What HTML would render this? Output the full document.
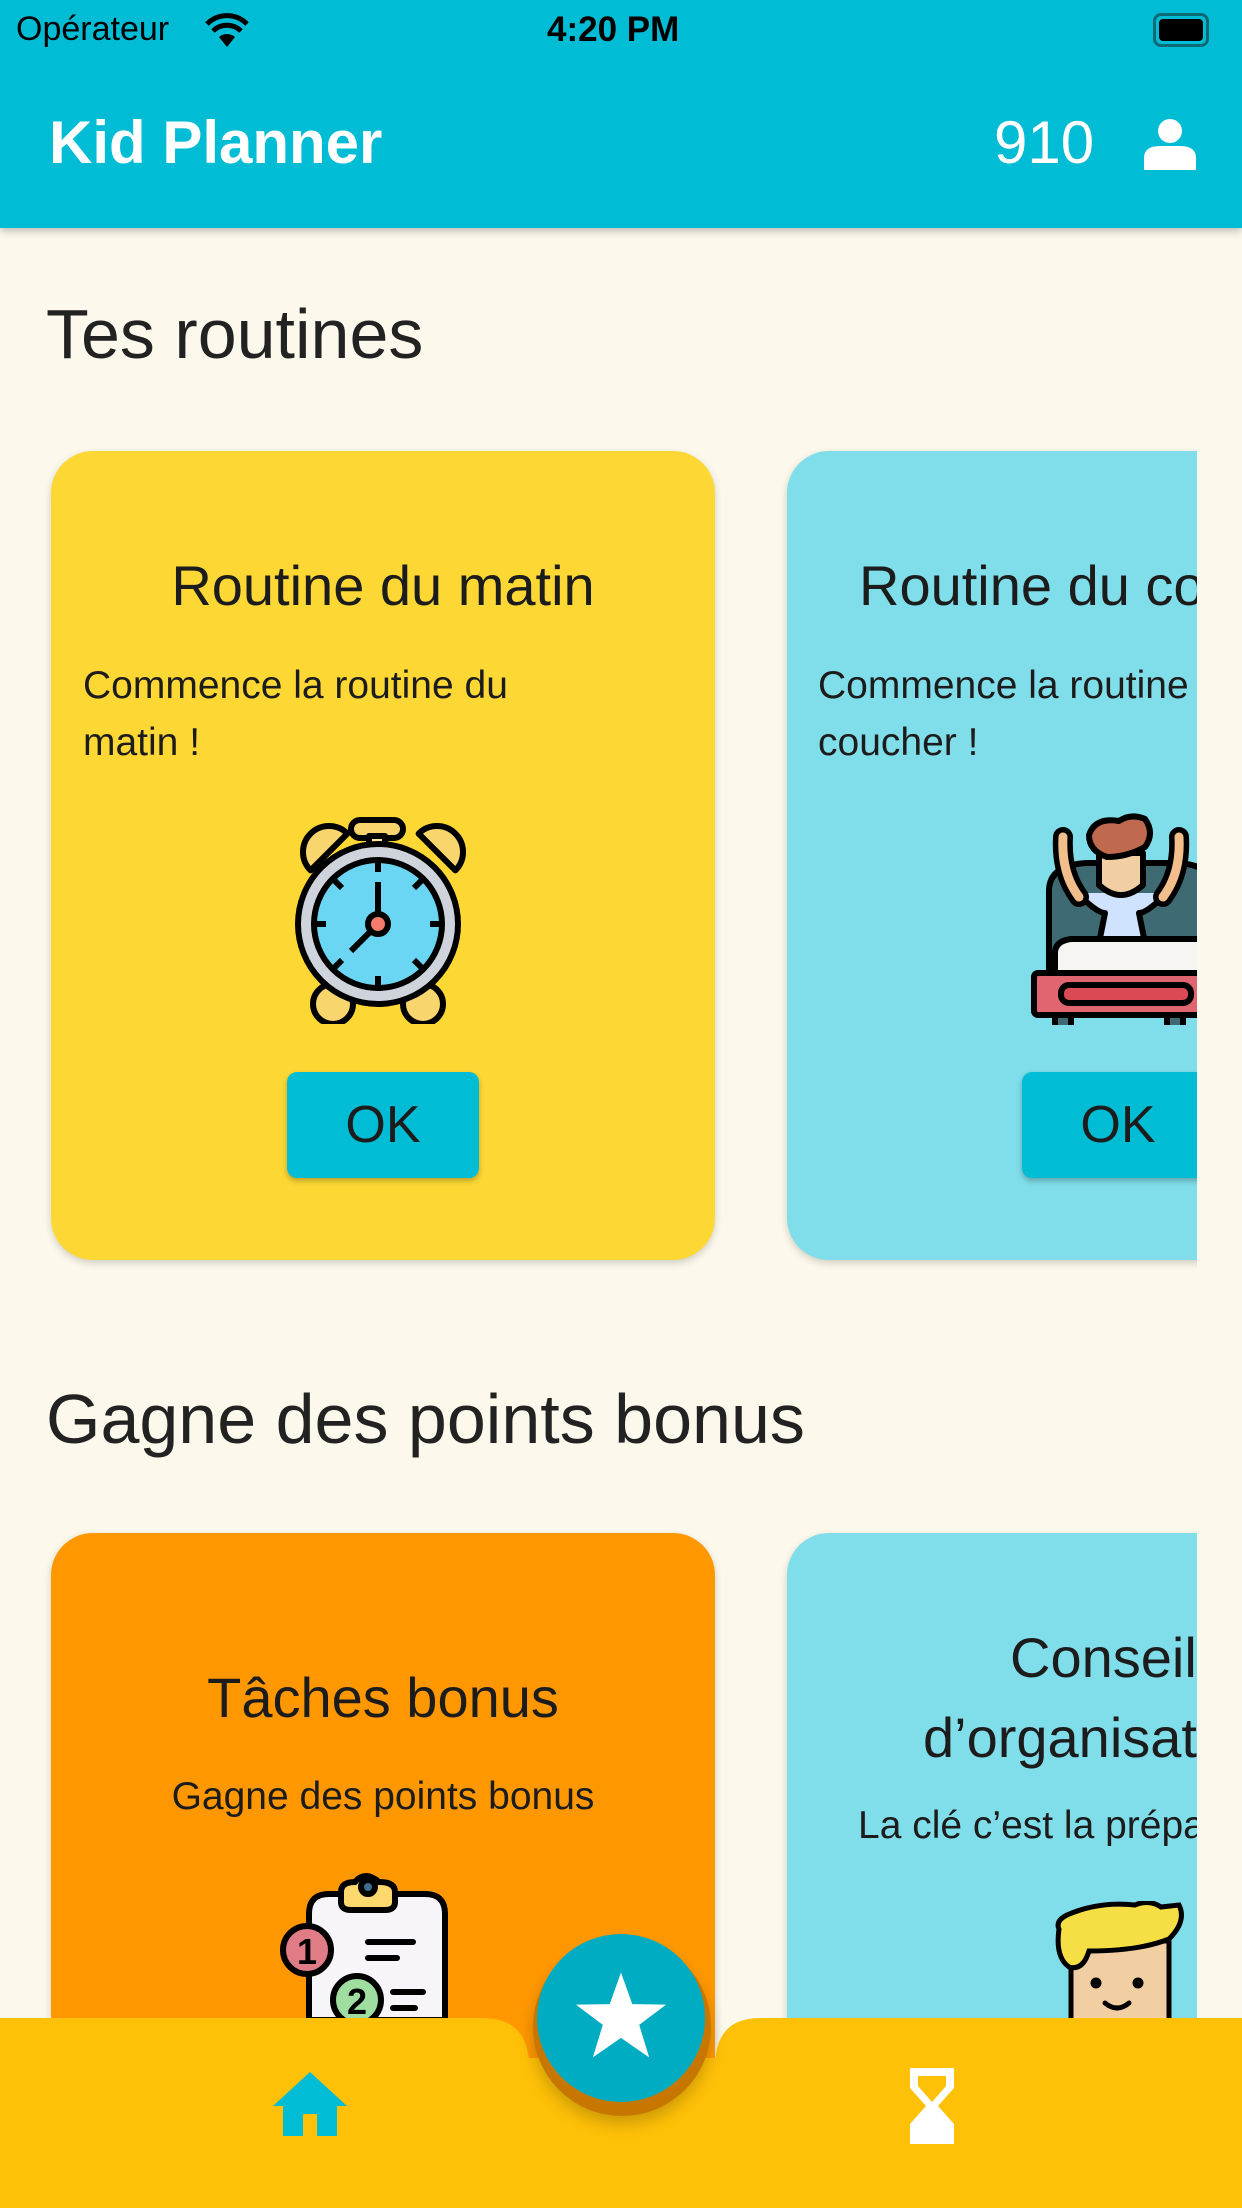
<!DOCTYPE html>
<html><head><meta charset="utf-8"><style>
*{margin:0;padding:0;box-sizing:border-box}
body{width:1242px;height:2208px;overflow:hidden;background:#FCF9EC;font-family:"Liberation Sans",sans-serif;color:#1c1c1c;position:relative}
.hdr{position:absolute;left:0;top:0;width:1242px;height:228px;background:#00BCD4;box-shadow:0 3px 8px rgba(0,0,0,.25);z-index:5}
.abs{position:absolute}
.card{position:absolute;border-radius:42px;overflow:hidden;box-shadow:0 3px 8px rgba(0,0,0,.18)}
.title{position:absolute;font-size:56px;white-space:nowrap;color:#1c1c1c}
.desc{position:absolute;font-size:39px;line-height:57px;white-space:nowrap}
.ok{position:absolute;width:192px;height:106px;background:#00BCD4;border-radius:10px;font-size:52px;text-align:center;line-height:106px;box-shadow:0 3px 6px rgba(0,0,0,.25)}
.h2{position:absolute;left:46px;font-size:70px;color:#222;white-space:nowrap}
</style></head><body>
<div class="hdr">
 <div class="abs" style="left:16px;top:10px;font-size:34px;color:#000">Opérateur</div>
 <svg class="abs" style="left:203px;top:13px" width="48" height="36" viewBox="0 0 46 36"><path d="M23 34 L15 24 A12 12 0 0 1 31 24 Z" fill="#000"/><path d="M9 18 A20 20 0 0 1 37 18" stroke="#000" stroke-width="5" fill="none"/><path d="M3 11 A28 28 0 0 1 43 11" stroke="#000" stroke-width="5" fill="none"/></svg>
 <div class="abs" style="left:547px;top:10px;font-size:35px;color:#000;font-weight:bold">4:20 PM</div>
 <div class="abs" style="left:1153px;top:13px;width:56px;height:34px;border:3px solid #0a6b77;border-radius:8px;padding:3px"><div style="width:100%;height:100%;background:#000;border-radius:4px"></div></div>
 <div class="abs" style="left:49px;top:108px;font-size:60px;font-weight:bold;color:#fff">Kid Planner</div>
 <div class="abs" style="left:994px;top:108px;font-size:60px;color:#fff">910</div>
 <svg class="abs" style="left:1142px;top:118px" width="56" height="52" viewBox="0 0 56 52"><circle cx="28" cy="13" r="12" fill="#fff"/><path d="M2 52 V40 Q2 28 18 28 H38 Q54 28 54 40 V52Z" fill="#fff"/></svg>
</div>

<div class="h2" style="top:294px">Tes routines</div>
<div class="h2" style="top:1379px">Gagne des points bonus</div>

<div class="abs" style="left:0;top:0;width:1197px;height:2208px;overflow:hidden">
 <div class="card" style="left:51px;top:451px;width:664px;height:809px;background:#FDD835">
  <div class="title" style="left:0;width:664px;text-align:center;top:102px">Routine du matin</div>
  <div class="desc" style="left:32px;top:206px">Commence la routine du<br>matin !</div>
  <svg class="abs" style="left:242px;top:363px" width="180" height="210" viewBox="0 0 180 210">
   <g stroke="#000" stroke-width="6" fill="#F9D56E" stroke-linejoin="round">
    <rect x="58" y="6" width="52" height="18" rx="9"/>
    <rect x="76" y="22" width="16" height="16" fill="#FCE79A"/>
    <path d="M-26 0 A26 26 0 0 1 26 0Z" transform="translate(36,38) rotate(-45)"/>
    <path d="M-26 0 A26 26 0 0 1 26 0Z" transform="translate(144,38) rotate(45)"/>
    <circle cx="40" cy="190" r="20"/><circle cx="130" cy="190" r="20"/>
    <circle cx="85" cy="110" r="80" fill="#CFD4DC"/>
    <circle cx="85" cy="110" r="64" fill="#6AD6F3"/>
    <path d="M85 46V58 M85 162V174 M21 110H33 M137 110H149 M40 65 L49 74 M130 65 L121 74 M40 155 L49 146 M130 155 L121 146 M85 68V104 M80 115 L58 137" fill="none"/>
    <circle cx="85" cy="110" r="10" fill="#F57C6B"/>
   </g>
  </svg>
  <div class="ok" style="left:236px;top:621px">OK</div>
 </div>

 <div class="card" style="left:787px;top:451px;width:664px;height:809px;background:#80DEEA">
  <div class="title" style="left:72px;top:102px">Routine du coucher</div>
  <div class="desc" style="left:31px;top:206px">Commence la routine du<br>coucher !</div>
  <svg class="abs" style="left:240px;top:362px" width="200" height="212" viewBox="0 0 200 212">
   <g stroke="#000" stroke-width="6" stroke-linecap="round" stroke-linejoin="round">
    <path d="M22 170 V78 Q22 52 60 50 H150 Q188 52 188 78 V170Z" fill="#3E6B73"/>
    <path d="M50 80 Q70 100 78 100 L72 130 H118 L112 100 Q120 100 140 80" fill="#CFE3FF"/>
    <path d="M36 24 Q34 60 52 84" stroke-width="20" fill="none"/>
    <path d="M36 24 Q34 60 52 84" stroke="#F2BE8C" stroke-width="9" fill="none"/>
    <path d="M152 24 Q154 60 136 84" stroke-width="20" fill="none"/>
    <path d="M152 24 Q154 60 136 84" stroke="#F2BE8C" stroke-width="9" fill="none"/>
    <path d="M72 40 V72 Q94 92 116 72 V40Z" fill="#F2CFA3"/>
    <path d="M62 22 Q68 4 92 8 Q104 0 118 6 Q128 20 118 34 Q100 44 80 44 Q62 38 62 22Z" fill="#BF6A4E"/>
    <path d="M28 140 Q28 128 44 126 H176 Q192 128 192 140 V160 H28Z" fill="#F7F5F2"/>
    <rect x="7" y="160" width="200" height="42" rx="4" fill="#DF6570"/>
    <rect x="34" y="172" width="130" height="18" rx="8" fill="#D94A55"/>
    <rect x="28" y="202" width="16" height="14" fill="#3E6B73"/>
    <rect x="140" y="202" width="16" height="14" fill="#3E6B73"/>
   </g>
  </svg>
  <div class="ok" style="left:235px;top:621px">OK</div>
 </div>

 <div class="card" style="left:51px;top:1533px;width:664px;height:640px;background:#FF9800">
  <div class="title" style="left:0;width:664px;text-align:center;top:132px">Tâches bonus</div>
  <div class="desc" style="left:0;width:664px;text-align:center;top:235px">Gagne des points bonus</div>
  <svg class="abs" style="left:224px;top:337px" width="180" height="160" viewBox="0 0 180 160">
   <g stroke="#000" stroke-width="6" stroke-linecap="round">
    <path d="M34 150 V44 Q34 24 54 24 H150 Q170 24 170 44 V150Z" fill="#F7F5FA"/>
    <path d="M66 22 Q66 12 80 12 Q90 0 104 12 Q120 12 120 22 V32 Q120 40 110 40 H76 Q66 40 66 32Z" fill="#FFD96E"/>
    <circle cx="93" cy="17" r="7" fill="#3B6E8F"/>
    <circle cx="32" cy="80" r="24" fill="#E07C86"/>
    <circle cx="82" cy="130" r="24" fill="#A0DDA0"/>
    <path d="M93 72H138 M93 88H122 M118 122H148 M118 138H140"/>
   </g>
   <text x="32" y="94" font-size="36" font-weight="bold" text-anchor="middle" fill="#000" font-family="Liberation Sans">1</text>
   <text x="82" y="144" font-size="36" font-weight="bold" text-anchor="middle" fill="#000" font-family="Liberation Sans">2</text>
  </svg>
 </div>

 <div class="card" style="left:787px;top:1533px;width:664px;height:640px;background:#80DEEA">
  <div class="title" style="left:223px;top:92px">Conseils</div>
  <div class="title" style="left:136px;top:172px">d’organisation</div>
  <div class="desc" style="left:71px;top:264px">La clé c’est la préparation</div>
  <svg class="abs" style="left:252px;top:368px" width="170" height="120" viewBox="0 0 170 120">
   <g stroke="#000" stroke-width="5" stroke-linecap="round">
    <path d="M32 40 V120 H130 V40Z" fill="#F2CFA3"/>
    <path d="M20 28 Q16 20 28 14 Q60 0 96 4 Q110 -2 122 6 L140 4 Q148 20 130 38 Q100 50 50 50 Q44 70 30 66 Q16 56 20 28Z" fill="#F6DF45"/>
    <circle cx="57" cy="82" r="3" fill="#000"/><circle cx="99" cy="82" r="3" fill="#000"/>
    <path d="M66 102 Q78 112 90 102" fill="none"/>
   </g>
  </svg>
 </div>
</div>

<svg class="abs" style="left:0;top:2018px" width="1242" height="190" viewBox="0 0 1242 190">
 <path d="M0 0 H482 Q527 0 529 45 V190 H0Z" fill="#FFC107"/>
 <path d="M1242 0 H760 Q717 0 715 45 V190 H1242Z" fill="#FFC107"/>
 <rect x="520" y="40" width="200" height="150" fill="#FFC107"/>
</svg>
<div class="abs" style="left:533px;top:1938px;width:178px;height:178px;border-radius:50%;background:#C77700;box-shadow:0 8px 16px rgba(0,0,0,.2)"></div>
<div class="abs" style="left:537px;top:1934px;width:168px;height:168px;border-radius:50%;background:#00ACC1"></div>
<svg class="abs" style="left:569px;top:1966px" width="104" height="104" viewBox="0 0 24 24"><path d="M12 1.5 L14.6 8.8 L22.4 8.9 L16.2 13.6 L18.5 21.1 L12 16.6 L5.5 21.1 L7.8 13.6 L1.6 8.9 L9.4 8.8Z" fill="#fff"/></svg>
<svg class="abs" style="left:273px;top:2072px" width="74" height="64" viewBox="0 0 74 64"><path d="M37 0 L74 34 H64 V64 H44 V42 H30 V64 H10 V34 H0Z" fill="#00BCD4"/></svg>
<svg class="abs" style="left:910px;top:2068px" width="44" height="76" viewBox="0 0 44 76"><path d="M0 0 H44 V20 L28 38 L44 56 V76 H0 V56 L16 38 L0 20Z M8 8 V18 L22 34 L36 18 V8Z" fill="#fff" fill-rule="evenodd"/></svg>
</body></html>
